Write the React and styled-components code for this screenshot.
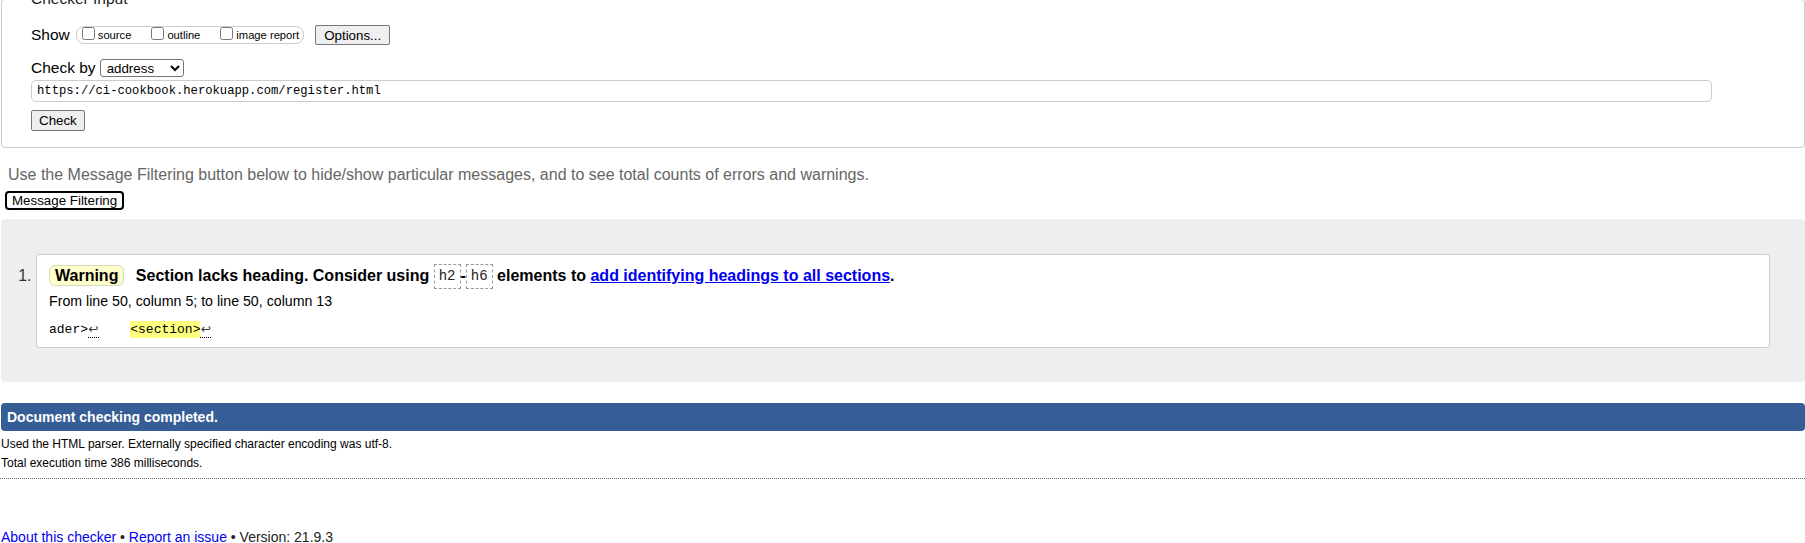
import React from "react"
import styled, { createGlobalStyle } from "styled-components"

const GlobalStyle = createGlobalStyle`
  html, body {
    margin: 0;
    padding: 0;
    background: #fff;
  }
  body {
    font-family: "Liberation Sans", Arial, sans-serif;
    color: #000;
    overflow: hidden;
  }
`

const Page = styled.div`
  padding-left: 1px;
  width: 1804px;
`

const InputFieldset = styled.fieldset`
  margin: -10px 0 0 0;
  padding: 17px 0 16px 29px;
  border: 1px solid #ccc;
  border-radius: 4px;
  min-width: 0;
`

const Legend = styled.legend`
  padding: 0;
  font-size: 15.5px;
  line-height: 18px;
  color: #222;
`

const Row = styled.div`
  display: flex;
  align-items: center;
  height: 20px;
  margin-top: ${(p) => p.$top || 0}px;
  font-size: 15.5px;
`

const OptionGroup = styled.div`
  display: flex;
  align-items: flex-start;
  gap: 20px;
  box-sizing: border-box;
  height: 18px;
  margin-left: 6px;
  padding: 0 4px 0 5px;
  border: 1px solid #ccc;
  border-radius: 8px;
`

const OptionItem = styled.label`
  display: flex;
  align-items: flex-start;
  font-size: 11.2px;
  line-height: 13px;

  input {
    width: 13px;
    height: 13px;
    margin: 0 3px 0 0;
  }

  span {
    padding-top: 2px;
  }
`

const Button = styled.button`
  box-sizing: border-box;
  height: ${(p) => p.$h || 20}px;
  margin-left: ${(p) => p.$left || 0}px;
  padding: 0 ${(p) => p.$pad || 7}px;
  font-family: "Liberation Sans", Arial, sans-serif;
  font-size: 13.33px;
  color: #000;
  background: #efefef;
  border: 1px solid #767676;
  border-radius: 2px;
`

const Select = styled.select`
  box-sizing: border-box;
  width: 84px;
  height: 18px;
  margin-left: 4px;
  padding: 0 0 0 2px;
  font-family: "Liberation Sans", Arial, sans-serif;
  font-size: 13.33px;
  color: #000;
  background: #fff;
  border: 1px solid #767676;
  border-radius: 3px;
`

const UrlInput = styled.input`
  display: block;
  box-sizing: border-box;
  width: 1681px;
  height: 22px;
  margin-top: 2px;
  padding: 0 5px;
  font-family: "Liberation Mono", "Courier New", monospace;
  font-size: 12.2px;
  color: #000;
  border: 1px solid #ccc;
  border-radius: 5px;
  outline: none;
`

const CheckWrap = styled.div`
  margin-top: 8px;
`

const Hint = styled.p`
  margin: 18px 0 0 7px;
  font-size: 16px;
  line-height: 18px;
  color: #666;
`

const FilterButton = styled.button`
  box-sizing: border-box;
  display: block;
  height: 19px;
  margin: 7px 0 0 4px;
  padding: 0 5px;
  font-family: "Liberation Sans", Arial, sans-serif;
  font-size: 13.33px;
  line-height: 15px;
  color: #000;
  background: #fff;
  border: 2px solid #000;
  border-radius: 4px;
`

const Results = styled.div`
  margin-top: 9px;
  padding: 35px 35px 34px;
  background: #eee;
  border-radius: 4px;
`

const MessageList = styled.ol`
  margin: 0;
  padding: 0;
`

const Message = styled.li`
  padding: 8px 12px 8px;
  font-size: 16px;
  background: #fff;
  border: 1px solid #ccc;
  border-radius: 3px;

  &::marker {
    color: #333;
  }
`

const Title = styled.p`
  margin: 0;
  line-height: 25px;
  font-weight: bold;
`

const Badge = styled.strong`
  display: inline-block;
  margin-right: 7px;
  padding: 0 5px;
  line-height: 19px;
  background: #ffffcc;
  border: 1px solid #d8d8b8;
  border-radius: 6px;
`

const Code = styled.code`
  display: inline-block;
  padding: 0 4px;
  line-height: 23px;
  font-family: "Liberation Mono", "Courier New", monospace;
  font-size: 14px;
  font-weight: normal;
  color: #222;
  border: 1px dashed #999;
  vertical-align: 1.5px;
`

const TextLink = styled.a`
  color: #00e;
  text-decoration: underline;
`

const Location = styled.p`
  margin: 3px 0 0;
  font-size: 14.2px;
  line-height: 18px;
`

const Extract = styled.p`
  margin: 10px 0 0;
  font-family: "Liberation Mono", "Courier New", monospace;
  font-size: 13px;
  line-height: 19px;
  white-space: pre;
`

const Mark = styled.mark`
  padding: 1px 0;
  background: #ffff80;
  color: #000;
`

const LineFeed = styled.span`
  display: inline-block;
  width: 11px;
  line-height: 16px;
  font-family: "DejaVu Sans", sans-serif;
  font-size: 12px;
  text-align: center;
  color: #333;
  border-bottom: 1px dotted #000;
`

const Status = styled.div`
  display: flex;
  align-items: center;
  height: 28px;
  margin-top: 21px;
  padding-left: 6px;
  font-size: 14px;
  font-weight: bold;
  color: #fff;
  background: #365d95;
  border-radius: 4px;
`

const Detail = styled.p`
  margin: ${(p) => p.$top || 0}px 0 0;
  font-size: 12px;
  line-height: 19px;
`

const Rule = styled.hr`
  margin: 5px 0 0 -1px;
  height: 0;
  border: 0;
  border-top: 1px dotted #666;
`

const Footer = styled.p`
  margin: 50px 0 0;
  font-size: 14px;
  line-height: 16px;
  color: #222;

  a {
    color: #00e;
  }
`

export default function App() {
  return (
    <Page>
      <GlobalStyle />
      <InputFieldset>
        <Legend>Checker Input</Legend>
        <Row>
          Show
          <OptionGroup>
            <OptionItem>
              <input type="checkbox" />
              <span>source</span>
            </OptionItem>
            <OptionItem>
              <input type="checkbox" />
              <span>outline</span>
            </OptionItem>
            <OptionItem>
              <input type="checkbox" />
              <span>image report</span>
            </OptionItem>
          </OptionGroup>
          <Button $left={11} $pad={8}>Options...</Button>
        </Row>
        <Row $top={13}>
          Check by
          <Select defaultValue="address">
            <option value="address">address</option>
            <option value="file">file upload</option>
            <option value="text">text input</option>
          </Select>
        </Row>
        <UrlInput readOnly value="https://ci-cookbook.herokuapp.com/register.html" />
        <CheckWrap>
          <Button $h={21}>Check</Button>
        </CheckWrap>
      </InputFieldset>

      <Hint>
        Use the Message Filtering button below to hide/show particular messages, and to see total counts of errors and warnings.
      </Hint>
      <FilterButton>Message Filtering</FilterButton>

      <Results>
        <MessageList>
          <Message>
            <Title>
              <Badge>Warning</Badge> Section lacks heading. Consider using <Code>h2</Code>-<Code>h6</Code> elements to{" "}
              <TextLink href="#">add identifying headings to all sections</TextLink>.
            </Title>
            <Location>From line 50, column 5; to line 50, column 13</Location>
            <Extract>
              ader&gt;<LineFeed>↩</LineFeed>    <Mark>&lt;section&gt;</Mark><LineFeed>↩</LineFeed>
            </Extract>
          </Message>
        </MessageList>
      </Results>

      <Status>Document checking completed.</Status>
      <Detail $top={4}>Used the HTML parser. Externally specified character encoding was utf-8.</Detail>
      <Detail>Total execution time 386 milliseconds.</Detail>
      <Rule />
      <Footer>
        <a href="#">About this checker</a> • <a href="#">Report an issue</a> • Version: 21.9.3
      </Footer>
    </Page>
  )
}
